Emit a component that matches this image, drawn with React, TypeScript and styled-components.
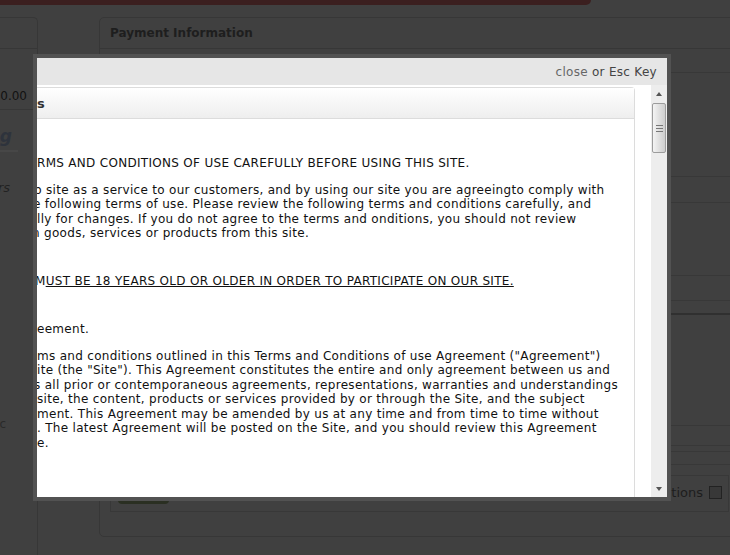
import React from 'react'
import styled, { createGlobalStyle } from 'styled-components'

const GlobalStyle = createGlobalStyle`
  html, body {
    margin: 0;
    padding: 0;
    background: #404040;
    overflow: hidden;
    font-family: "DejaVu Sans", Verdana, sans-serif;
  }
`

const Page = styled.div`
  position: relative;
  width: 730px;
  height: 555px;
  overflow: hidden;
  background: #404040;
`

const AlertBar = styled.div`
  width: 591px;
  height: 5px;
  background: #3b1f1f;
  border-radius: 0 0 6px 0;
`

const Columns = styled.div`
  display: flex;
  align-items: flex-start;
  margin-top: 12px;
`

const SidePanel = styled.div`
  flex: none;
  width: 37px;
  height: 560px;
  border-top: 1px solid #373737;
  border-right: 1px solid #373737;
  border-top-right-radius: 5px;
  overflow: hidden;
`

const SideHead = styled.div`
  height: 30px;
  border-bottom: 1px solid #373737;
`

const SideTotal = styled.div`
  height: 61px;
  border-bottom: 1px solid #373737;
  display: flex;
  align-items: flex-end;
  justify-content: flex-end;
  padding: 0 10px 6px 0;
  box-sizing: border-box;
  font-size: 12px;
  line-height: 14px;
  color: #121212;
  white-space: nowrap;
`

const SideText = styled.div<{ $top: number; $right: number; $italic?: boolean; $bold?: boolean; $size: number; $color: string }>`
  display: flex;
  justify-content: flex-end;
  margin-top: ${p => p.$top}px;
  padding-right: ${p => p.$right}px;
  font-size: ${p => p.$size}px;
  line-height: ${p => p.$size + 2}px;
  font-style: ${p => (p.$italic ? 'italic' : 'normal')};
  font-weight: ${p => (p.$bold ? 700 : 400)};
  color: ${p => p.$color};
  white-space: nowrap;
`

const SideRule = styled.div`
  width: 18px;
  height: 2px;
  margin-top: 4px;
  background: #474747;
`

const PaymentPanel = styled.div`
  flex: none;
  width: 641px;
  margin-left: 61px;
  height: 520px;
  box-sizing: border-box;
  border: 1px solid #373737;
  border-radius: 5px;
  display: flex;
  flex-direction: column;
`

const PanelTitle = styled.div`
  height: 30px;
  border-bottom: 1px solid #373737;
  display: flex;
  align-items: center;
  padding-left: 10px;
  font-size: 12px;
  font-weight: 700;
  color: #1e1e1e;
`

const Row = styled.div<{ $h: number; $strong?: boolean }>`
  height: ${p => p.$h}px;
  border-bottom: ${p => (p.$strong ? '2px solid #303030' : '1px solid #383838')};
`

const AgreeBox = styled.div`
  margin: 10px 10px 0;
  height: 37px;
  box-sizing: border-box;
  border: 1px solid #383838;
  display: flex;
  align-items: flex-end;
  justify-content: space-between;
  padding: 0 6px 7px 7px;
`

const GoButton = styled.div`
  width: 51px;
  height: 26px;
  border-radius: 4px;
  background: #2a2f22;
`

const AgreeLabel = styled.label`
  display: flex;
  align-items: center;
  gap: 6px;
  margin-bottom: 4px;
  font-size: 13px;
  color: #1d1d1d;
  white-space: nowrap;
`

const Check = styled.span`
  width: 11px;
  height: 11px;
  border: 1px solid #222;
  background: #383838;
`

/* ---------- modal ---------- */

const Modal = styled.div`
  position: absolute;
  left: 33px;
  top: 54px;
  width: 638px;
  height: 447px;
  box-sizing: border-box;
  padding: 4px;
  background: #525252;
  display: flex;
  flex-direction: column;
`

const ModalBar = styled.div`
  flex: none;
  height: 27px;
  background: #e6e6e6;
  display: flex;
  align-items: center;
  justify-content: flex-end;
  padding-right: 10px;
  font-size: 12px;
  letter-spacing: 0.3px;
  color: #444;
`

const CloseLink = styled.span`
  color: #666;
  margin-right: 4px;
`

const ModalBody = styled.div`
  flex: 1;
  display: flex;
  min-height: 0;
  background: #fff;
`

const Viewport = styled.div`
  flex: 1;
  overflow: hidden;
  padding-top: 2px;
`

const Card = styled.div`
  margin-right: 16px;
  height: 420px;
  border: 1px solid #dcdcdc;
  border-left: none;
  border-top-right-radius: 4px;
`

const CardHead = styled.div`
  height: 30px;
  border-bottom: 1px solid #dcdcdc;
  background: linear-gradient(#ffffff, #eeeeee);
  display: flex;
  align-items: center;
  font-size: 13px;
  font-weight: 700;
  color: #333;
`

const CardBody = styled.div`
  padding-top: 37px;
  font-size: 12px;
  letter-spacing: 0.3px;
  line-height: 14.5px;
  color: #111;
  white-space: nowrap;
`

const Para = styled.div<{ $gap: number; $under?: boolean }>`
  margin-top: ${p => p.$gap}px;
  text-decoration: ${p => (p.$under ? 'underline' : 'none')};
`

const Line = styled.div`
  height: 14.5px;
`

const Clipped = styled.span<{ $hide: number }>`
  display: inline-block;
  margin-left: -${p => p.$hide}px;
`

const Scrollbar = styled.div`
  flex: none;
  width: 16px;
  background: #ededed;
  display: flex;
  flex-direction: column;
  align-items: center;
`

const ScrollArrow = styled.div<{ $down?: boolean }>`
  height: 17px;
  width: 16px;
  display: flex;
  align-items: center;
  justify-content: center;
  &::after {
    content: '';
    border-left: 3.5px solid transparent;
    border-right: 3.5px solid transparent;
    ${p => (p.$down ? 'border-top: 4px solid #555;' : 'border-bottom: 4px solid #555;')}
  }
`

const Thumb = styled.div`
  width: 14px;
  height: 50px;
  margin-top: 1px;
  box-sizing: border-box;
  border: 1px solid #9c9c9c;
  border-radius: 2px;
  background: linear-gradient(to right, #f4f4f4, #dedede 55%, #cdcdcd);
  display: flex;
  flex-direction: column;
  align-items: center;
  justify-content: center;
  gap: 2px;
`

const Grip = styled.div`
  width: 7px;
  height: 1px;
  background: #777;
`

const Filler = styled.div`
  flex: 1;
`

type TermLine = { cut?: string; hide?: number; text: string }
type TermPara = { gap: number; under?: boolean; lines: TermLine[] }

const terms: TermPara[] = [
  { gap: 0, lines: [{ text: 'RMS AND CONDITIONS OF USE CAREFULLY BEFORE USING THIS SITE.' }] },
  {
    gap: 12,
    lines: [
      { cut: 'b', hide: 3, text: ' site as a service to our customers, and by using our site you are agreeingto comply with' },
      { cut: 'e', hide: 4, text: ' following terms of use. Please review the following terms and conditions carefully, and' },
      { text: 'lly for changes. If you do not agree to the terms and onditions, you should not review' },
      { cut: 'n', hide: 5, text: ' goods, services or products from this site.' },
    ],
  },
  { gap: 33, under: true, lines: [{ cut: 'M', hide: 2, text: 'UST BE 18 YEARS OLD OR OLDER IN ORDER TO PARTICIPATE ON OUR SITE.' }] },
  { gap: 34, lines: [{ text: 'eement.' }] },
  {
    gap: 12,
    lines: [
      { text: 'ms and conditions outlined in this Terms and Conditions of use Agreement ("Agreement")' },
      { text: 'ite (the "Site"). This Agreement constitutes the entire and only agreement between us and' },
      { cut: 's', hide: 3, text: ' all prior or contemporaneous agreements, representations, warranties and understandings' },
      { text: 'site, the content, products or services provided by or through the Site, and the subject' },
      { text: 'ment. This Agreement may be amended by us at any time and from time to time without' },
      { text: '. The latest Agreement will be posted on the Site, and you should review this Agreement' },
      { text: 'e.' },
    ],
  },
]

const paymentRows = [
  { h: 23 }, { h: 103 }, { h: 25 }, { h: 72 }, { h: 24 },
  { h: 12, strong: true }, { h: 110 }, { h: 19 }, { h: 5 }, { h: 12 },
]

const App = () => {
  return (
    <Page>
      <GlobalStyle />
      <AlertBar />
      <Columns>
        <SidePanel>
          <SideHead />
          <SideTotal>$0.00</SideTotal>
          <SideText $top={17} $right={25} $size={17} $bold $italic $color="#2e333c">Billing</SideText>
          <SideRule />
          <SideText $top={28} $right={27} $size={13} $italic $color="#222">Others</SideText>
          <SideText $top={222} $right={31} $size={12} $color="#2a2a2a">Misc</SideText>
        </SidePanel>
        <PaymentPanel>
          <PanelTitle>Payment Information</PanelTitle>
          {paymentRows.map((r, i) => (
            <Row key={i} $h={r.h} $strong={r.strong} />
          ))}
          <AgreeBox>
            <GoButton />
            <AgreeLabel>
              I agree to the Terms and Conditions
              <Check />
            </AgreeLabel>
          </AgreeBox>
        </PaymentPanel>
      </Columns>

      <Modal>
        <ModalBar>
          <CloseLink>close</CloseLink>or Esc Key
        </ModalBar>
        <ModalBody>
          <Viewport>
            <Card>
              <CardHead>s</CardHead>
              <CardBody>
                {terms.map((p, i) => (
                  <Para key={i} $gap={p.gap} $under={p.under}>
                    {p.lines.map((l, j) => (
                      <Line key={j}>
                        {l.cut && <Clipped $hide={l.hide || 0}>{l.cut}</Clipped>}
                        {l.text}
                      </Line>
                    ))}
                  </Para>
                ))}
              </CardBody>
            </Card>
          </Viewport>
          <Scrollbar>
            <ScrollArrow />
            <Thumb>
              <Grip />
              <Grip />
              <Grip />
            </Thumb>
            <Filler />
            <ScrollArrow $down />
          </Scrollbar>
        </ModalBody>
      </Modal>
    </Page>
  )
}

export default App
